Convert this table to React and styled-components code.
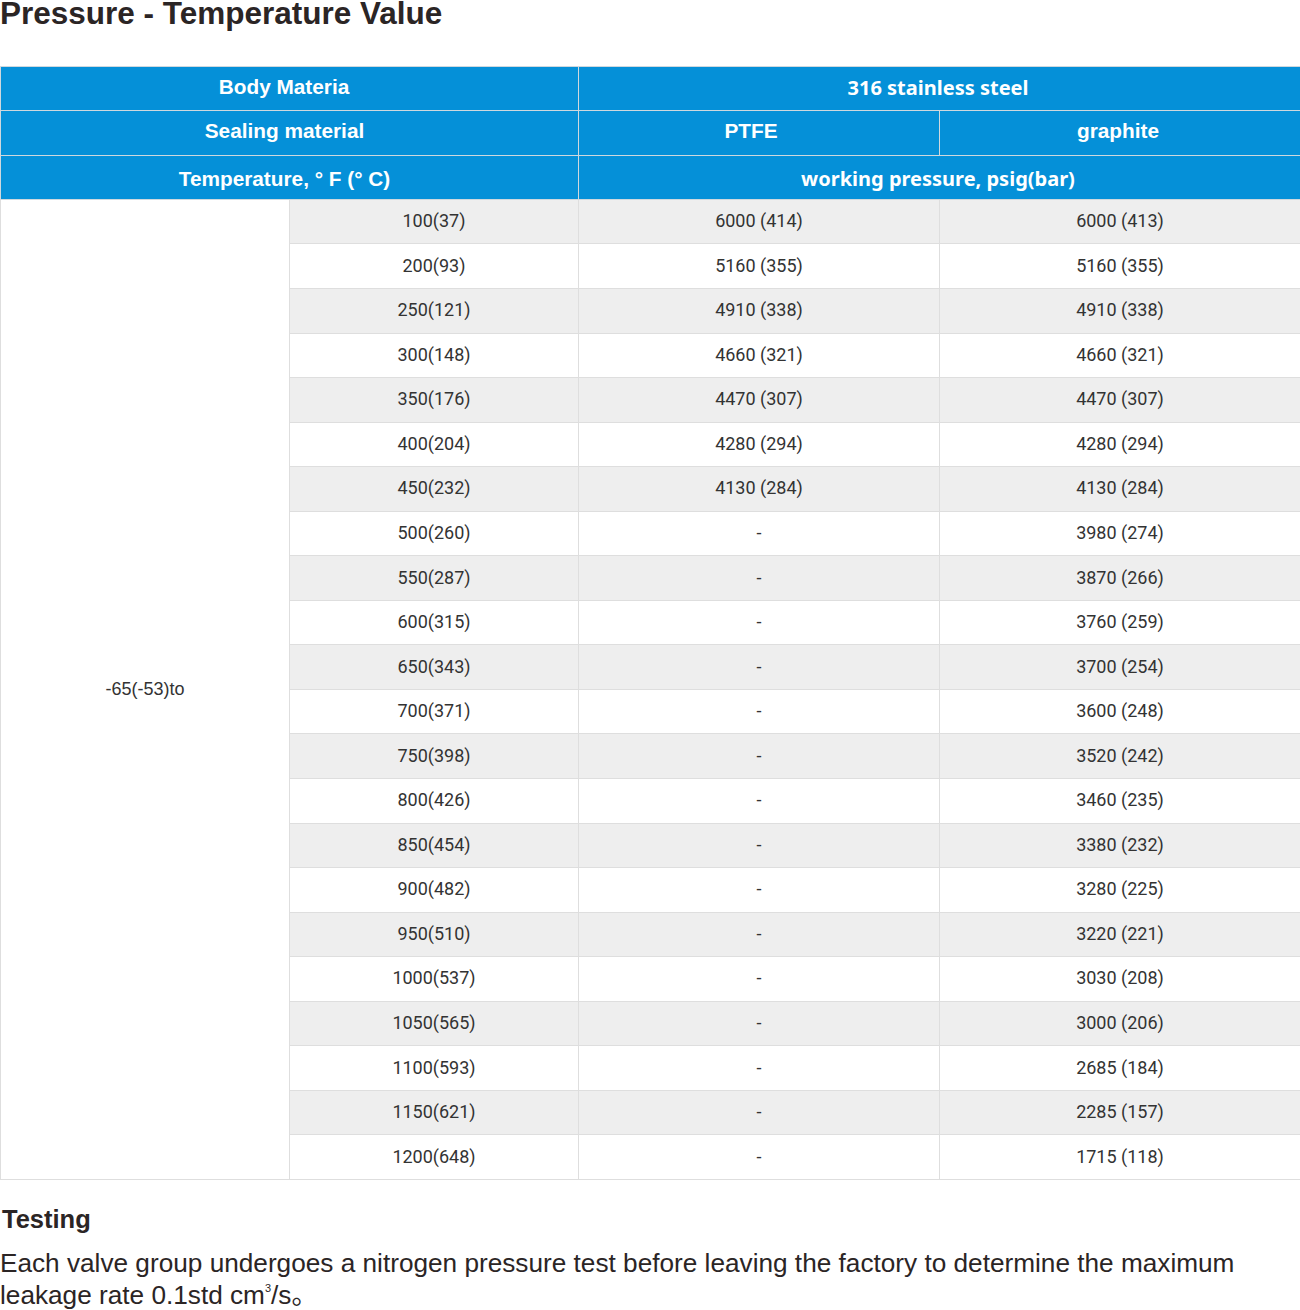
import React from "react";
import styled, { createGlobalStyle } from "styled-components";

const Global = createGlobalStyle`
  html, body { margin: 0; padding: 0; background: #fff; }
  body { font-family: "Liberation Sans", Arial, sans-serif; color: #2b2525; }
`;

const Page = styled.div`
  width: 1300px;
`;

const Title = styled.h2`
  margin: 0;
  font-family: "Liberation Sans", Arial, sans-serif;
  font-size: 31.5px;
  line-height: 26px;
  font-weight: 700;
  color: #2b2525;
`;

const Table = styled.table`
  margin-top: 40px;
  width: 1300px;
  border-collapse: collapse;
  table-layout: fixed;
  border: 1px solid #e0e0e0;
`;

const HeadRow = styled.tr`
  height: 44.3px;
`;

const HeadCell = styled.th`
  background: #0590d8;
  color: #fff;
  border: 1px solid #cfd8de;
  font-family: ${(p) => (p.$alt ? '"Noto Sans", "Open Sans", sans-serif' : '"Liberation Sans", Arial, sans-serif')};
  font-size: ${(p) => (p.$alt ? "20px" : "20.8px")};
  font-weight: 700;
  text-align: center;
  padding: ${(p) => p.$pt || 0}px ${(p) => p.$shift || 0}px ${(p) => p.$pb || 0}px 0;
  vertical-align: middle;
`;

const Row = styled.tr`
  height: 44.55px;
`;

const Cell = styled.td`
  background: ${(p) => (p.$shade ? "#eeeeee" : "#ffffff")};
  border: 1px solid #dedede;
  font-family: Roboto, "Liberation Sans", sans-serif;
  font-size: 18px;
  color: #333;
  text-align: center;
  vertical-align: middle;
  padding: 0 0 2px 0;
`;

const SpanCell = styled.td`
  background: #fff;
  border: 1px solid #dedede;
  font-family: "Liberation Sans", Arial, sans-serif;
  font-size: 18px;
  color: #333;
  text-align: center;
  vertical-align: middle;
  padding: 0;
`;

const SubTitle = styled.h3`
  margin: 24px 0 0 2px;
  font-family: "Liberation Sans", Arial, sans-serif;
  font-size: 25.5px;
  line-height: 30px;
  font-weight: 700;
  color: #2b2525;
`;

const Para = styled.p`
  margin: 13px 0 0 0;
  max-width: 1280px;
  font-family: "Liberation Sans", Arial, "Noto Sans CJK SC", sans-serif;
  font-size: 26.2px;
  line-height: 32px;
  color: #2b2525;
  sup {
    font-size: 11px;
    vertical-align: 12px;
    line-height: 0;
  }
`;

const rows = [
  ["100(37)", "6000 (414)", "6000 (413)"],
  ["200(93)", "5160 (355)", "5160 (355)"],
  ["250(121)", "4910 (338)", "4910 (338)"],
  ["300(148)", "4660 (321)", "4660 (321)"],
  ["350(176)", "4470 (307)", "4470 (307)"],
  ["400(204)", "4280 (294)", "4280 (294)"],
  ["450(232)", "4130 (284)", "4130 (284)"],
  ["500(260)", "-", "3980 (274)"],
  ["550(287)", "-", "3870 (266)"],
  ["600(315)", "-", "3760 (259)"],
  ["650(343)", "-", "3700 (254)"],
  ["700(371)", "-", "3600 (248)"],
  ["750(398)", "-", "3520 (242)"],
  ["800(426)", "-", "3460 (235)"],
  ["850(454)", "-", "3380 (232)"],
  ["900(482)", "-", "3280 (225)"],
  ["950(510)", "-", "3220 (221)"],
  ["1000(537)", "-", "3030 (208)"],
  ["1050(565)", "-", "3000 (206)"],
  ["1100(593)", "-", "2685 (184)"],
  ["1150(621)", "-", "2285 (157)"],
  ["1200(648)", "-", "1715 (118)"],
];

export default function App() {
  return (
    <Page>
      <Global />
      <Title>Pressure - Temperature Value</Title>
      <Table>
        <colgroup>
          <col style={{ width: 289 }} />
          <col style={{ width: 289 }} />
          <col style={{ width: 361 }} />
          <col style={{ width: 361 }} />
        </colgroup>
        <thead>
          <HeadRow>
            <HeadCell colSpan={2} $shift={11} $pb={3}>Body Materia</HeadCell>
            <HeadCell colSpan={2} $alt $shift={3} $pb={3}>316 stainless steel</HeadCell>
          </HeadRow>
          <HeadRow>
            <HeadCell colSpan={2} $shift={10} $pb={3}>Sealing material</HeadCell>
            <HeadCell $shift={16} $pb={3}>PTFE</HeadCell>
            <HeadCell $shift={4} $pb={3}>graphite</HeadCell>
          </HeadRow>
          <HeadRow>
            <HeadCell colSpan={2} $shift={10} $pt={4}>Temperature, ° F (° C)</HeadCell>
            <HeadCell colSpan={2} $alt $shift={3} $pt={2}>working pressure, psig(bar)</HeadCell>
          </HeadRow>
        </thead>
        <tbody>
          {rows.map((r, i) => (
            <Row key={r[0]}>
              {i === 0 && <SpanCell rowSpan={rows.length}>-65(-53)to</SpanCell>}
              <Cell $shade={i % 2 === 0}>{r[0]}</Cell>
              <Cell $shade={i % 2 === 0}>{r[1]}</Cell>
              <Cell $shade={i % 2 === 0}>{r[2]}</Cell>
            </Row>
          ))}
        </tbody>
      </Table>
      <SubTitle>Testing</SubTitle>
      <Para>
        Each valve group undergoes a nitrogen pressure test before leaving the factory to determine the maximum
        leakage rate 0.1std cm<sup>3</sup>/s。
      </Para>
    </Page>
  );
}
